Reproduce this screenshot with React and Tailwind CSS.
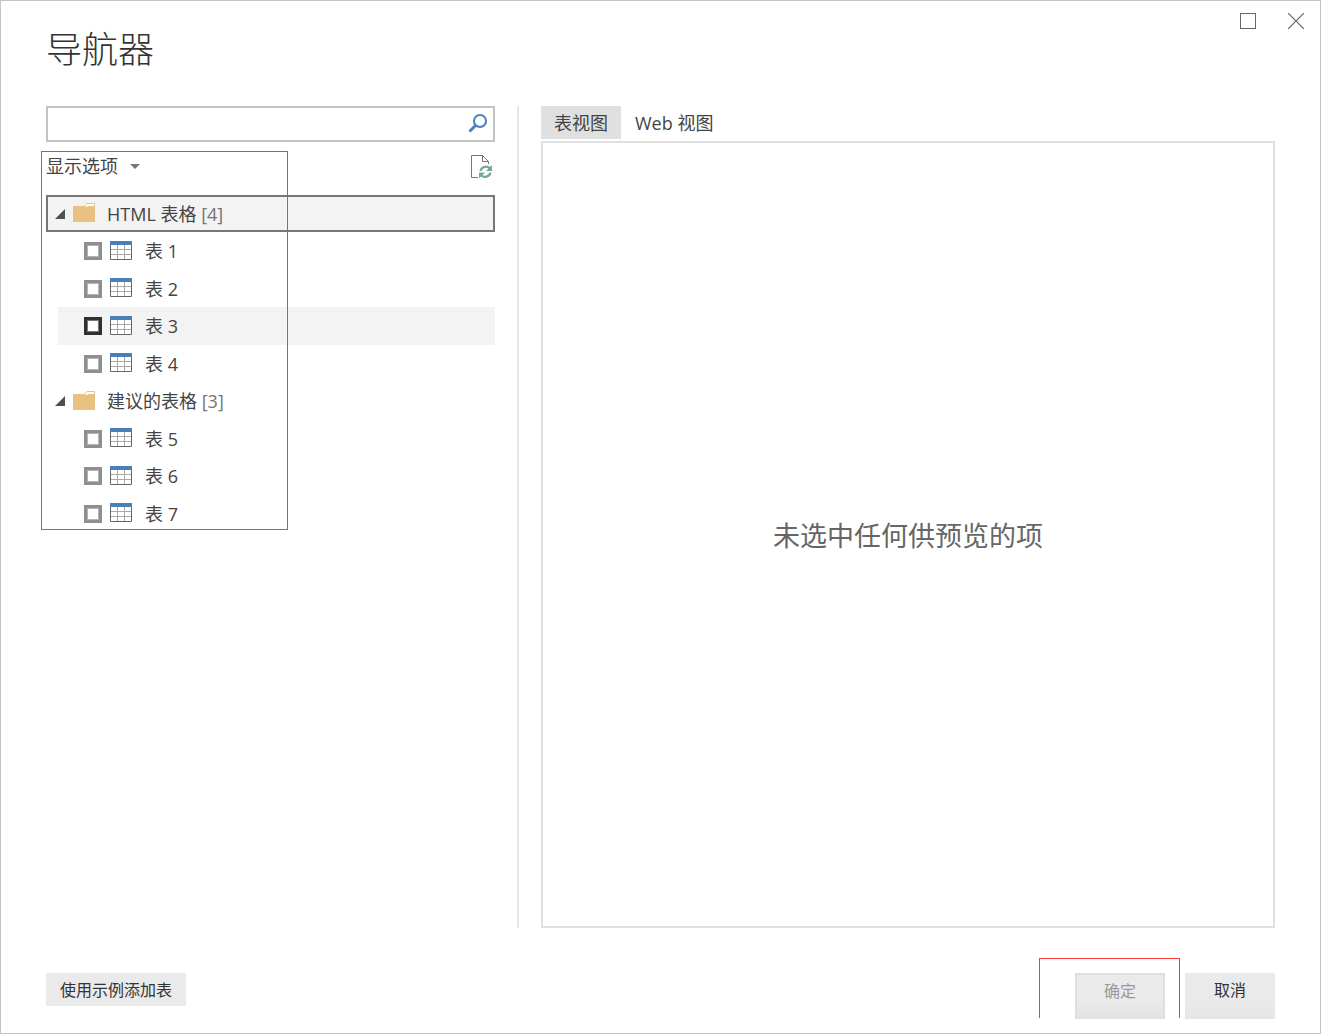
import React, { useState } from "react";

const ROWS = [
  { id: "html", type: "group", name: "HTML 表格", count: 4 },
  { id: "t1", type: "table", name: "表 1" },
  { id: "t2", type: "table", name: "表 2" },
  { id: "t3", type: "table", name: "表 3" },
  { id: "t4", type: "table", name: "表 4" },
  { id: "suggested", type: "group", name: "建议的表格", count: 3 },
  { id: "t5", type: "table", name: "表 5" },
  { id: "t6", type: "table", name: "表 6" },
  { id: "t7", type: "table", name: "表 7" },
];

const SearchIcon = () => (
  <svg width="20" height="22" viewBox="0 0 20 22" fill="none" aria-hidden="true">
    <circle cx="12" cy="8" r="6" stroke="#4a80b8" strokeWidth="2" />
    <path d="M8 12L1.5 18.5" stroke="#4a80b8" strokeWidth="3" />
  </svg>
);

const RefreshIcon = () => (
  <svg width="22" height="24" viewBox="0 0 22 24" fill="none" aria-hidden="true">
    <path d="M7 22.500H0.500V0.500H11.500L17.500 6.500V9M11.500 0.500V6.500H17.500" stroke="#777" />
    <path
      d="M9.500 16A5.500 5.500 0 0 1 19 13.500M19.500 17.500A5.500 5.500 0 0 1 10 20"
      stroke="#76a797"
      strokeWidth="2.200"
    />
    <path d="M21 10V16H15Z" fill="#76a797" />
    <path d="M8 23.500V17.500H14Z" fill="#76a797" />
  </svg>
);

const FolderIcon = () => (
  <svg width="22" height="21" viewBox="0 0 22 21" aria-hidden="true">
    <path d="M11.500 3.500L14 0.500H21.500V4" fill="#fff" stroke="#e9c282" />
    <path d="M0 3H12L13 4H14L15 3H22V19H0Z" fill="#e9c282" />
  </svg>
);

const TableIcon = () => (
  <svg width="22" height="21" viewBox="0 0 22 21" aria-hidden="true">
    <path d="M0.500 3V18.500H21.500V3" fill="#fff" stroke="#666" />
    <path d="M7.500 4V18M14.500 4V18M1 8.500H21M1 13.500H21" stroke="#aaa" fill="none" />
    <rect width="22" height="4" fill="#4a80b8" />
  </svg>
);

const GroupRow = ({ row, selected }) => (
  <li
    className={`flex items-center h-[37px] even:h-[38px] pl-[7px] border-2 ${
      selected ? "border-[#767676] bg-[#f3f3f3]" : "border-transparent"
    }`}>
    <button
      type="button"
      aria-label={`折叠 ${row.name}`}
      className="flex items-center w-[18px] h-5">
      <svg width="10" height="10" viewBox="0 0 10 10" aria-hidden="true">
        <path d="M10 0V10H0Z" fill="#505050" />
      </svg>
    </button>
    <FolderIcon />
    <span className="ml-3 text-lg leading-6">
      {row.name} <span className="text-[#757575]">[{row.count}]</span>
    </span>
  </li>
);

const TableRow = ({ row, active, checked, onToggle }) => (
  <li
    className={`flex items-center h-[37px] even:h-[38px] ml-3 pl-[26px] ${
      active ? "bg-[#f3f3f3]" : ""
    }`}>
    <input
      id={row.id}
      type="checkbox"
      checked={checked}
      onChange={() => onToggle(row.id)}
      className={`appearance-none size-[18px] border-3 bg-white inset-ring checked:bg-[#505050] ${
        active
          ? "border-[#303030] inset-ring-[#777777]"
          : "border-[#8f8f8f] inset-ring-[#b4b4b4]"
      }`}
    />
    <label htmlFor={row.id} className="flex items-center flex-1 ml-2 text-lg leading-6">
      <TableIcon />
      <span className="ml-[13px]">{row.name}</span>
    </label>
  </li>
);

const App = () => {
  const [checkedIds, setCheckedIds] = useState([]);
  const [view, setView] = useState("table");

  const toggle = (id) =>
    setCheckedIds((ids) =>
      ids.includes(id) ? ids.filter((x) => x !== id) : [...ids, id]
    );

  const tabClass = (name) =>
    `h-[33px] px-[13px] text-lg ${view === name ? "bg-[#e0e0e0]" : ""}`;

  return (
    <div className="flex flex-col min-h-screen border border-[#c4c4c4] bg-white text-[#444444] font-['Open_Sans','Noto_Sans_CJK_SC',sans-serif]">
      <header className="flex items-start justify-between pl-[45px] pr-4">
        <h1 className="mt-[22px] text-4xl leading-12 font-light text-[#333333] font-['Noto_Sans_CJK_SC',sans-serif]">
          导航器
        </h1>
        <div className="flex gap-8 mt-3">
          <button type="button" aria-label="最大化">
            <svg width="16" height="16" viewBox="0 0 16 16" aria-hidden="true">
              <rect x="0.500" y="0.500" width="15" height="15" fill="none" stroke="#666" />
            </svg>
          </button>
          <button type="button" aria-label="关闭">
            <svg width="16" height="16" viewBox="0 0 16 16" aria-hidden="true">
              <path d="M0 0L16 16M16 0L0 16" stroke="#666" strokeWidth="1.200" />
            </svg>
          </button>
        </div>
      </header>

      <main className="flex flex-1 mt-[35px] px-[45px]">
        <section className="w-[449px] shrink-0">
          <div className="flex items-center h-9 pr-[5px] border-2 border-[#c3c3c3]">
            <input
              type="search"
              aria-label="搜索"
              className="flex-1 h-full px-2 text-lg outline-none"
            />
            <button type="button" aria-label="搜索">
              <SearchIcon />
            </button>
          </div>

          <div className="relative mt-[9px]">
            <div className="flex items-start justify-between h-11 pr-0.5">
              <button type="button" className="flex items-center h-[30px] text-lg">
                显示选项
                <svg width="10" height="5" viewBox="0 0 10 5" className="ml-3" aria-hidden="true">
                  <path d="M0 0H10L5 5Z" fill="#777" />
                </svg>
              </button>
              <button type="button" aria-label="刷新" className="mt-1">
                <RefreshIcon />
              </button>
            </div>
            <ul>
              {ROWS.map((row) =>
                row.type === "group" ? (
                  <GroupRow key={row.id} row={row} selected={row.id === "html"} />
                ) : (
                  <TableRow
                    key={row.id}
                    row={row}
                    active={row.id === "t3"}
                    checked={checkedIds.includes(row.id)}
                    onToggle={toggle}
                  />
                )
              )}
            </ul>
            {/* callout around the options and the tree */}
            <div className="absolute top-0 bottom-0.5 -left-[5px] w-[247px] border border-[#f04040] pointer-events-none" />
          </div>
        </section>

        <div className="w-0.5 mx-[22px] bg-[#e6e6e6]" />

        <section className="flex flex-col flex-1">
          <div role="tablist" className="flex gap-px">
            <button
              type="button"
              role="tab"
              aria-selected={view === "table"}
              onClick={() => setView("table")}
              className={tabClass("table")}>
              表视图
            </button>
            <button
              type="button"
              role="tab"
              aria-selected={view === "web"}
              onClick={() => setView("web")}
              className={tabClass("web")}>
              Web 视图
            </button>
          </div>
          <div
            role="tabpanel"
            className="flex flex-1 items-center justify-center mt-0.5 pt-0.5 border-2 border-[#e0e0e0]">
            <p className="text-[27px] leading-9 text-[#666666]">未选中任何供预览的项</p>
          </div>
        </section>
      </main>

      <footer className="flex items-start justify-between h-[105px] pt-[45px] px-[45px] text-base text-[#333333]">
        <button type="button" className="h-[33px] px-3.5 bg-[#eaeaea]">
          使用示例添加表
        </button>
        <div className="flex gap-5">
          <div className="relative">
            <button
              type="button"
              disabled
              className="w-[90px] h-[46px] pb-3 border-2 border-b-0 border-[#dfdfdf] bg-linear-to-b from-[#eaeaea] from-60% to-[#e2e2e2] text-[#999999]">
              确定
            </button>
            {/* callout around the confirm button, open at the bottom */}
            <div className="absolute -top-[15px] -left-9 -right-[15px] h-[60px] border border-b-0 border-[#ff3b3b] pointer-events-none" />
          </div>
          <button
            type="button"
            className="w-[90px] h-[46px] pb-3 bg-linear-to-b from-[#eaeaea] from-60% to-[#e6e6e6]">
            取消
          </button>
        </div>
      </footer>
    </div>
  );
};

export default App;
